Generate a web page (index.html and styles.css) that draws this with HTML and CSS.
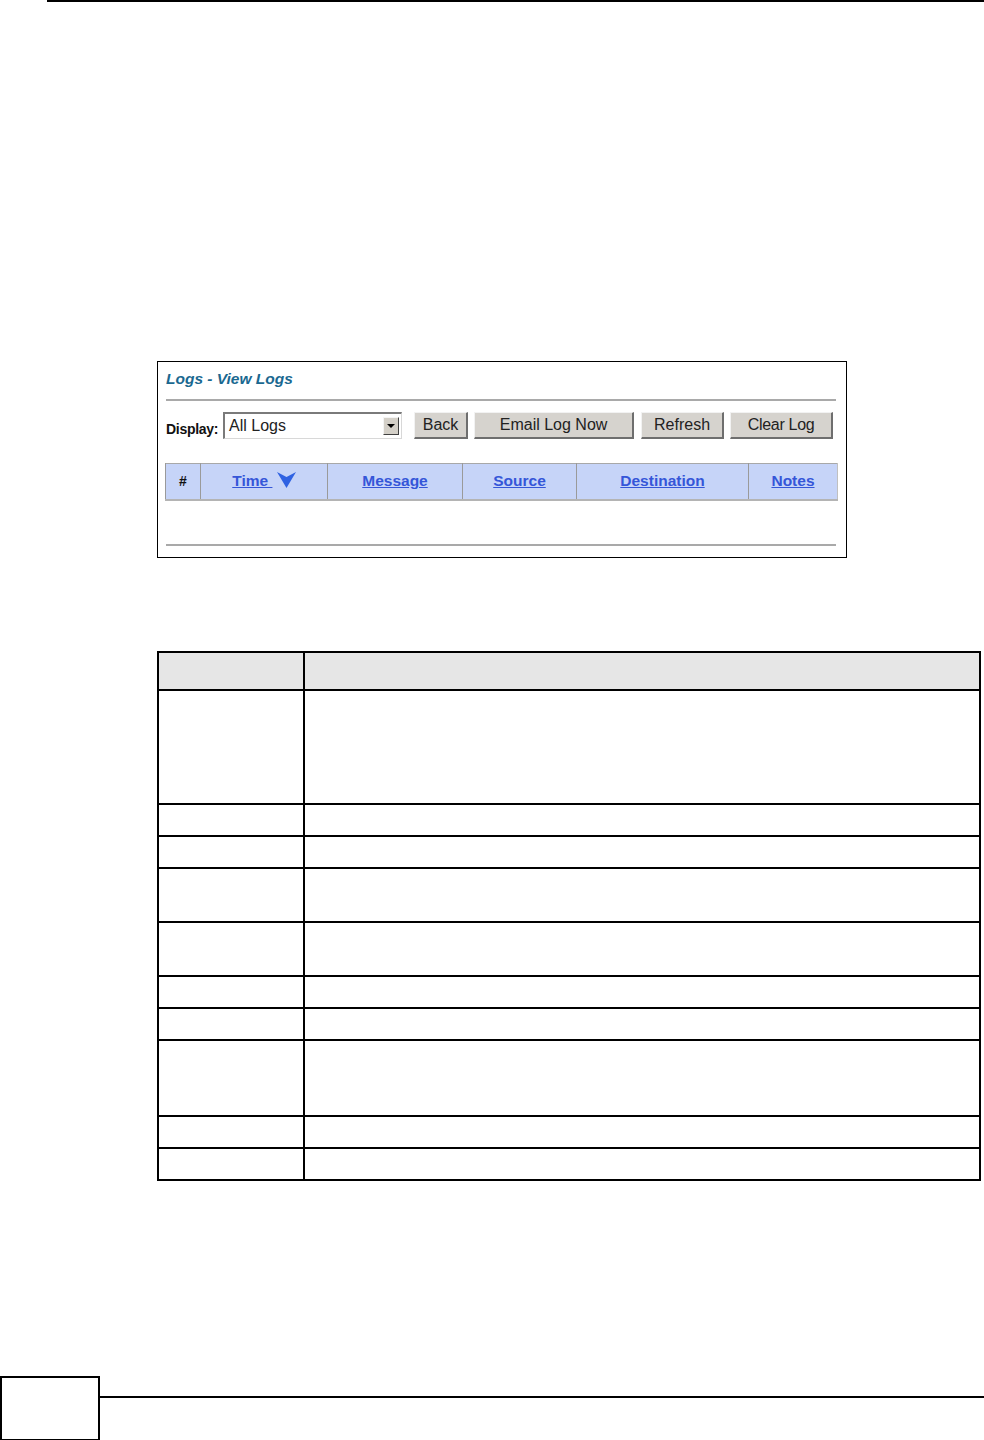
FILE: index.html
```html
<html lang="en"><head>
    <meta charset="UTF-8">
    <meta name="viewport" content="width=device-width, initial-scale=1.0">
    <title>Logs - View Logs</title>
    <link rel="stylesheet" href="styles.css">
  </head>
  <body>
    <!-- Page header rule -->
    <div class="top-rule"></div>

    <!-- Screen capture: Logs - View Logs -->
    <div class="screen">
      <div class="screen-title">Logs - View Logs</div>
      <div class="screen-rule"></div>

      <div class="toolbar">
        <span class="toolbar-label">Display:</span>
        <div class="select">
          <span class="select-value">All Logs</span>
          <span class="select-arrow"><span class="caret"></span></span>
        </div>
        <button class="btn btn-back">Back</button>
        <button class="btn btn-email">Email Log Now</button>
        <button class="btn btn-refresh">Refresh</button>
        <button class="btn btn-clear">Clear Log</button>
      </div>

      <table class="log-table">
        <tr>
          <th class="col-num">#</th>
          <th class="col-time">
            <a href="#">Time </a>
            <svg class="sort-icon" width="19" height="16" viewBox="0 0 19 16">
              <path d="M0 0 L9.5 5 L19 0 L9.5 16 Z" fill="#2f62e2"/>
            </svg>
          </th>
          <th class="col-message"><a href="#">Message</a></th>
          <th class="col-source"><a href="#">Source</a></th>
          <th class="col-dest"><a href="#">Destination</a></th>
          <th class="col-notes"><a href="#">Notes</a></th>
        </tr>
      </table>

      <div class="screen-bottom-rule"></div>
    </div>

    <!-- Field description table -->
    <table class="desc-table">
      <tr class="desc-head"><td class="label-col"></td><td></td></tr>
      <tr class="row-114"><td></td><td></td></tr>
      <tr class="row-32"><td></td><td></td></tr>
      <tr class="row-32"><td></td><td></td></tr>
      <tr class="row-54"><td></td><td></td></tr>
      <tr class="row-54"><td></td><td></td></tr>
      <tr class="row-32"><td></td><td></td></tr>
      <tr class="row-32"><td></td><td></td></tr>
      <tr class="row-76"><td></td><td></td></tr>
      <tr class="row-32"><td></td><td></td></tr>
      <tr class="row-32"><td></td><td></td></tr>
    </table>

    <!-- Page footer -->
    <div class="footer">
      <div class="page-box"></div>
      <div class="footer-rule"></div>
    </div>
  </body></html>
```

FILE: styles.css
```css
/* General Styling */
body {
  font-family: "Liberation Sans", Arial, sans-serif;
  margin: 0;
  padding: 0;
  background-color: #ffffff;
  width: 984px;
  height: 1440px;
  overflow: hidden;
}

/* Header rule */
.top-rule {
  margin-left: 47px;
  border-top: 2px solid #000;
}

/* Screen capture box */
.screen {
  box-sizing: border-box;
  margin: 359px 0 0 157px;
  width: 690px;
  height: 197px;
  border: 1px solid #000;
  padding: 8px 10px 0 8px;
}

.screen-title {
  font-size: 15.5px;
  line-height: 18px;
  font-weight: bold;
  font-style: italic;
  color: #1a6890;
}

.screen-rule {
  margin-top: 11px;
  border-top: 2px solid #a9a9a9;
}

/* Toolbar */
.toolbar {
  display: flex;
  align-items: center;
  margin-top: 11px;
  height: 27px;
}

.toolbar-label {
  font-size: 14px;
  font-weight: bold;
  color: #111;
  letter-spacing: -0.3px;
  margin-top: 6px;
}

.select {
  box-sizing: border-box;
  display: flex;
  align-items: center;
  margin-left: 5px;
  width: 179px;
  height: 27px;
  background: #fff;
  border-top: 2px solid #7a7a7a;
  border-left: 2px solid #7a7a7a;
  border-right: 1px solid #d8d8d8;
  border-bottom: 1px solid #d8d8d8;
}

.select-value {
  flex: 1;
  padding-left: 4px;
  font-size: 16px;
  color: #222;
}

.select-arrow {
  box-sizing: border-box;
  display: flex;
  align-items: center;
  justify-content: center;
  width: 16px;
  height: 18px;
  margin-right: 2px;
  background: #d4d0c8;
  border-top: 1px solid #f4f4f4;
  border-left: 1px solid #f4f4f4;
  border-right: 1px solid #404040;
  border-bottom: 1px solid #404040;
}

.caret {
  width: 0;
  height: 0;
  border-left: 4px solid transparent;
  border-right: 4px solid transparent;
  border-top: 4px solid #000;
}

/* Buttons */
.btn {
  box-sizing: border-box;
  height: 27px;
  padding: 0;
  font-family: "Liberation Sans", Arial, sans-serif;
  font-size: 16px;
  color: #222;
  background-color: #d6d3ce;
  border-top: 1px solid #f2f2f2;
  border-left: 1px solid #f2f2f2;
  border-right: 2px solid #6e6e6e;
  border-bottom: 2px solid #6e6e6e;
  border-radius: 0;
  margin-left: 6px;
}

.btn-back {
  width: 54px;
  margin-left: 12px;
}

.btn-email {
  width: 160px;
}

.btn-refresh {
  width: 83px;
  margin-left: 7px;
}

.btn-clear {
  width: 103px;
  letter-spacing: -0.3px;
}

/* Log table */
.log-table {
  margin: 24px 0 0 -1px;
  width: 673px;
  border-collapse: collapse;
  background-color: #c6d4f8;
  border-top: 1px solid #a8a8a8;
  border-left: 1px solid #a8a8a8;
  border-right: 1px solid #c0c0c0;
  border-bottom: 2px solid #b4b4b4;
}

.log-table th {
  height: 36px;
  padding: 0;
  text-align: center;
  font-size: 15.5px;
  font-weight: bold;
  border-left: 1px solid #9a9a9a;
}

.log-table th a {
  color: #3556d8;
  text-decoration: underline;
  white-space: pre;
}

.col-num {
  width: 34px;
  font-size: 14px !important;
  color: #111;
}

.col-time { width: 126px; }
.col-message { width: 134px; }
.col-source { width: 113px; }
.col-dest { width: 171px; }

.sort-icon {
  vertical-align: -2px;
}

.screen-bottom-rule {
  margin-top: 43px;
  border-top: 2px solid #a9a9a9;
}

/* Description table */
.desc-table {
  margin: 93px 0 0 157px;
  width: 824px;
  border-collapse: collapse;
}

.desc-table td {
  border: 2px solid #000;
  padding: 0;
}

.desc-table .label-col {
  width: 144px;
}

.desc-head td {
  height: 38px;
  background-color: #e6e6e6;
}

.row-114 td { height: 114px; }
.row-76 td { height: 76px; }
.row-54 td { height: 54px; }
.row-32 td { height: 32px; }

/* Footer */
.footer {
  display: flex;
  margin-top: 195px;
}

.page-box {
  box-sizing: border-box;
  width: 100px;
  height: 65px;
  border: 2px solid #000;
}

.footer-rule {
  flex: 1;
  margin-top: 20px;
  border-top: 2px solid #000;
  height: 0;
}
```
